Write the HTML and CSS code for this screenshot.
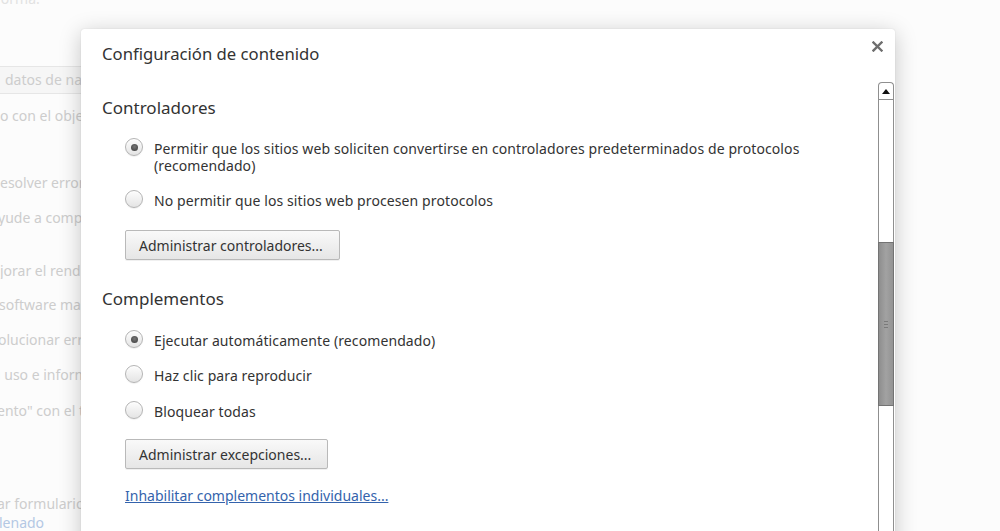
FILE: index.html
```html
<!DOCTYPE html>
<html lang="es">
<head>
<meta charset="utf-8">
<title>Configuración de contenido</title>
<link rel="stylesheet" href="styles.css">
</head>
<body>
<div class="page">
  <div class="bg-line bg-top">forma.</div>
  <div class="bg-button">datos de navegación...</div>
  <div class="bg-line l-1">o con el objetivo</div>
  <div class="bg-line l-2">esolver errores</div>
  <div class="bg-line l-3">yude a completar</div>
  <div class="bg-line l-4">jorar el rendimiento</div>
  <div class="bg-line l-5">software malicioso</div>
  <div class="bg-line l-6">olucionar errores</div>
  <div class="bg-line l-7">ı uso e informes</div>
  <div class="bg-line l-8">ento" con el tráfico</div>
  <div class="bg-line l-9">ar formularios</div>
  <div class="bg-line l-10 bg-link">lenado</div>
</div>

<div class="dialog">
  <div class="dialog-header">
    <h1 class="dialog-title">Configuración de contenido</h1>
    <button class="close" aria-label="Cerrar">
      <svg width="11" height="11" viewBox="0 0 11 11"><path d="M1.5 1.5 L9.5 9.5 M9.5 1.5 L1.5 9.5" stroke="#6e6e6e" stroke-width="2.4" stroke-linecap="square"/></svg>
    </button>
  </div>
  <div class="dialog-body">
    <div class="content">
      <section class="section">
        <h2 class="section-title">Controladores</h2>
        <label class="radio-row first">
          <span class="radio checked"></span>
          <span class="radio-label">Permitir que los sitios web soliciten convertirse en controladores predeterminados de protocolos<br>(recomendado)</span>
        </label>
        <label class="radio-row">
          <span class="radio"></span>
          <span class="radio-label">No permitir que los sitios web procesen protocolos</span>
        </label>
        <button class="btn btn-1">Administrar controladores...</button>
      </section>
      <section class="section s-2">
        <h2 class="section-title">Complementos</h2>
        <label class="radio-row first">
          <span class="radio checked"></span>
          <span class="radio-label">Ejecutar automáticamente (recomendado)</span>
        </label>
        <label class="radio-row">
          <span class="radio"></span>
          <span class="radio-label">Haz clic para reproducir</span>
        </label>
        <label class="radio-row last">
          <span class="radio"></span>
          <span class="radio-label">Bloquear todas</span>
        </label>
        <button class="btn btn-2">Administrar excepciones...</button>
        <a class="link" href="#">Inhabilitar complementos individuales...</a>
      </section>
    </div>
    <div class="scrollbar">
      <div class="sb-up"><span class="sb-arrow"></span></div>
      <div class="sb-track-top"></div>
      <div class="sb-thumb"><span class="grip"></span></div>
      <div class="sb-track-bottom"></div>
    </div>
  </div>
</div>
</body>
</html>
```

FILE: styles.css
```css
html, body {
  margin: 0;
  padding: 0;
  height: 100%;
  overflow: hidden;
}
body {
  background: #fcfcfc;
  font-family: "Noto Sans", "Open Sans", sans-serif;
  color: #333;
  position: relative;
}

/* faded background page (only the strip left of the dialog shows) */
.page {
  width: 81px;
  overflow: hidden;
  display: flex;
  flex-direction: column;
  align-items: flex-start;
  color: #cdcdcd;
  font-size: 14px;
  line-height: 17px;
}
.bg-line {
  white-space: nowrap;
  max-width: 84px;
  overflow: hidden;
}
.bg-top { margin-top: -10px; margin-left: -4px; color: #e2e2e2; }
.bg-button {
  margin-top: 59px;
  margin-left: -20px;
  width: 130px;
  height: 26px;
  line-height: 26px;
  padding-left: 24px;
  border: 1px solid #e6e6e6;
  border-radius: 2px;
  background: #f6f6f6;
  white-space: nowrap;
  overflow: hidden;
  flex: none;
}
.l-1 { margin-top: 13px; }
.l-2 { margin-top: 50px; }
.l-3 { margin-top: 18px; margin-left: -2px; }
.l-4 { margin-top: 36px; margin-left: 0; }
.l-5 { margin-top: 17px; margin-left: -1px; }
.l-6 { margin-top: 18px; margin-left: -2px; }
.l-7 { margin-top: 18px; margin-left: -3px; }
.l-8 { margin-top: 19px; margin-left: -3px; }
.l-9 { margin-top: 76px; margin-left: -3px; }
.l-10 { margin-top: 2px; margin-left: -1px; }
.bg-link { color: #b4c8e4; }

/* dialog (overlay) */
.dialog {
  position: absolute;
  left: 81px;
  top: 29px;
  width: 814px;
  height: 560px;
  background: #fff;
  border-radius: 3px;
  box-shadow: 0 4px 22px rgba(0,0,0,0.22), 0 0 1px rgba(0,0,0,0.2);
  display: flex;
  flex-direction: column;
}
.dialog-header {
  display: flex;
  justify-content: space-between;
  align-items: flex-start;
  padding: 15px 12px 0 21px;
  height: 38px;
}
.dialog-title {
  margin: 0;
  font-size: 16.7px;
  font-weight: normal;
  line-height: 20px;
  color: #333;
}
.close {
  border: 0;
  background: none;
  padding: 0;
  margin-top: -3px;
  width: 11px;
  height: 11px;
  display: flex;
}

.dialog-body {
  flex: 1;
  display: flex;
  min-height: 0;
}
.content {
  flex: 1;
  padding: 16px 0 0 21px;
}
.section {
  display: flex;
  flex-direction: column;
  align-items: flex-start;
}
.s-2 { margin-top: 29px; }
.section-title {
  margin: 0;
  font-size: 17px;
  font-weight: normal;
  line-height: 20px;
  color: #333;
}
.radio-row {
  display: flex;
  align-items: flex-start;
  margin-left: 23px;
  margin-top: 18px;
  font-size: 14px;
  letter-spacing: 0.1px;
  line-height: 17px;
  color: #333;
}
.radio-row.first { margin-top: 22px; }
.s-2 .radio-row.first { margin-top: 23px; }
.s-2 .radio-row.last { margin-top: 19px; }
.radio {
  flex: none;
  width: 16px;
  height: 16px;
  border: 1px solid #b4b4b4;
  border-radius: 50%;
  background: linear-gradient(#fdfdfd, #e4e4e4);
  box-shadow: inset 0 1px 1px rgba(255,255,255,0.8), 0 1px 1px rgba(0,0,0,0.06);
  margin-top: -2px;
  margin-right: 11px;
  display: flex;
  align-items: center;
  justify-content: center;
}
.radio.checked::after {
  content: "";
  width: 7px;
  height: 7px;
  border-radius: 50%;
  background: radial-gradient(circle at 50% 40%, #777, #3a3a3a);
}
.radio-label { white-space: nowrap; }

.btn {
  font-family: inherit;
  font-size: 14px;
  color: #333;
  height: 30px;
  padding: 0 13px;
  margin-left: 23px;
  text-align: left;
  white-space: nowrap;
  border: 1px solid #b9b9b9;
  border-radius: 2px;
  background: linear-gradient(#f9f9f9, #e6e6e6);
  box-shadow: 0 1px 0 rgba(0,0,0,0.06);
}
.btn-1 { margin-top: 21px; width: 215px; }
.btn-2 { margin-top: 19px; width: 203px; }
.link {
  margin-left: 23px;
  margin-top: 18px;
  font-size: 14px;
  line-height: 17px;
  color: #3463ac;
  text-decoration: underline;
}

/* custom scrollbar */
.scrollbar {
  flex: none;
  width: 16px;
  margin-right: 1px;
  display: flex;
  flex-direction: column;
  border: 1px solid #8f8f8f;
  border-bottom: 0;
  border-radius: 4px 4px 0 0;
  background: #fff;
  box-sizing: border-box;
}
.sb-up {
  height: 16px;
  border-bottom: 1px solid #8f8f8f;
  display: flex;
  align-items: center;
  justify-content: center;
}
.sb-arrow {
  width: 0;
  height: 0;
  border-left: 4px solid transparent;
  border-right: 4px solid transparent;
  border-bottom: 5px solid #111;
}
.sb-track-top { height: 142px; }
.sb-thumb {
  height: 162px;
  margin: 0 -1px;
  background: linear-gradient(90deg, #8e8e8e, #a2a2a2 50%, #939393);
  border: 1px solid #737373;
  display: flex;
  align-items: center;
  justify-content: center;
}
.grip {
  width: 4px;
  height: 7px;
  background: repeating-linear-gradient(#7a7a7a 0 1px, transparent 1px 3px);
}
.sb-track-bottom { flex: 1; }
```
